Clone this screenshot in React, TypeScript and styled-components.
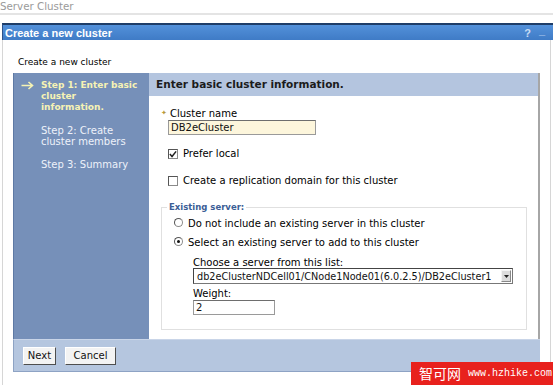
import React from 'react'
import styled, { createGlobalStyle } from 'styled-components'

const GlobalStyles = createGlobalStyle`
  html, body {
    margin: 0;
    padding: 0;
    background: #ffffff;
  }
  body {
    width: 553px;
    height: 385px;
    overflow: hidden;
    font-family: "DejaVu Sans", Verdana, sans-serif;
    color: #000;
  }
`

const steps = [
  { id: 1, lines: ['Step 1: Enter basic', 'cluster', 'information.'], active: true },
  { id: 2, lines: ['Step 2: Create', 'cluster members'], active: false },
  { id: 3, lines: ['Step 3: Summary'], active: false },
]

const App = () => {
  return (
    <Page>
      <GlobalStyles />
      <PageTitle>Server Cluster</PageTitle>

      <Portlet>
        <TitleBar>
          <span>Create a new cluster</span>
          <TitleIcons>
            <span>?</span>
            <span className="min">_</span>
          </TitleIcons>
        </TitleBar>

        <PortletBody>
          <Intro>Create a new cluster</Intro>

          <Wizard>
            <WizardTop>
              <StepNav>
                {steps.map((s) => (
                  <Step key={s.id} active={s.active}>
                    <StepMarker>
                      {s.active ? (
                        <svg width="13" height="9" viewBox="0 0 13 9">
                          <path d="M0.5 4.5 H11 M7.5 1 L11.5 4.5 L7.5 8" fill="none" stroke="#f6f3b4" strokeWidth="1.6" />
                        </svg>
                      ) : null}
                    </StepMarker>
                    <StepText>
                      {s.lines.map((l) => (
                        <div key={l}>{l}</div>
                      ))}
                    </StepText>
                  </Step>
                ))}
              </StepNav>

              <Content>
                <ContentHeader>Enter basic cluster information.</ContentHeader>
                <Form>
                  <FieldLabel>
                    <Required>✦</Required>
                    Cluster name
                  </FieldLabel>
                  <TextInput width={148} indent={7} tinted>DB2eCluster</TextInput>

                  <CheckRow top={13}>
                    <CheckBox>
                      <svg width="9" height="9" viewBox="0 0 9 9">
                        <path d="M1 4 L3.4 6.8 L8 1" fill="none" stroke="#222" strokeWidth="1.7" />
                      </svg>
                    </CheckBox>
                    Prefer local
                  </CheckRow>

                  <CheckRow top={15}>
                    <CheckBox />
                    Create a replication domain for this cluster
                  </CheckRow>

                  <Fieldset>
                    <Legend>Existing server:</Legend>
                    <RadioRow>
                      <Radio />
                      Do not include an existing server in this cluster
                    </RadioRow>
                    <RadioRow>
                      <Radio checked />
                      Select an existing server to add to this cluster
                    </RadioRow>

                    <Nested>
                      <SubLabel>Choose a server from this list:</SubLabel>
                      <Select>
                        <span>db2eClusterNDCell01/CNode1Node01(6.0.2.5)/DB2eCluster1</span>
                        <SelectArrow>
                          <svg width="5" height="3" viewBox="0 0 5 3">
                            <path d="M0 0 H5 L2.5 3 Z" fill="#222" />
                          </svg>
                        </SelectArrow>
                      </Select>
                      <SubLabel className="weight">Weight:</SubLabel>
                      <TextInput width={82} indent={0}>2</TextInput>
                    </Nested>
                  </Fieldset>
                </Form>
              </Content>
            </WizardTop>

            <ButtonBar>
              <Button w={33}>Next</Button>
              <Button w={51}>Cancel</Button>
            </ButtonBar>
          </Wizard>
        </PortletBody>
      </Portlet>

      <Watermark>
        <span className="cn">智可网</span>
        <span className="url">www.hzhike.com</span>
      </Watermark>
    </Page>
  )
}

const Page = styled.div`
  position: relative;
  width: 553px;
  height: 385px;
  overflow: hidden;
`

const PageTitle = styled.div`
  height: 13px;
  line-height: 13px;
  font-size: 10.3px;
  color: #9a9a9a;
  padding-left: 0;
  border-bottom: 2px solid #e4e4e4;
`

const Portlet = styled.div`
  margin: 8px 0 0 2px;
  width: 551px;
`

const TitleBar = styled.div`
  height: 15px;
  border-top: 2px solid #1e3d68;
  border-left: 1px solid #2b5288;
  background: linear-gradient(to bottom, #5391da, #3f7bc6);
  display: flex;
  align-items: center;
  justify-content: space-between;
  padding: 0 8px 0 2px;
  font-family: "Liberation Sans", Arial, sans-serif;
  font-weight: 700;
  font-size: 11px;
  color: #ffffff;
`

const TitleIcons = styled.div`
  display: flex;
  gap: 8px;
  font-size: 11px;
  color: #c9dcf3;
  .min {
    position: relative;
    top: -3px;
  }
`

const PortletBody = styled.div`
  border-left: 1px solid #d6d6d6;
  border-right: 1px solid #d6d6d6;
  border-bottom: 1px solid #d6d6d6;
  width: 547px;
  height: 342px;
  padding-top: 16px;
  box-sizing: content-box;
`

const Intro = styled.div`
  font-size: 9px;
  line-height: 12px;
  margin-left: 15px;
`

const Wizard = styled.div`
  margin: 5px 0 0 10px;
  width: 527px;
  display: flex;
  flex-direction: column;
`

const WizardTop = styled.div`
  display: flex;
  height: 266px;
`

const StepNav = styled.div`
  width: 136px;
  background: #7690b9;
  border-left: 1px solid #5e79a4;
  box-sizing: border-box;
  padding-top: 7px;
  display: flex;
  flex-direction: column;
  gap: 12px;
`

const Step = styled.div<{ active: boolean }>`
  display: flex;
  font-size: ${(p) => (p.active ? '9px' : '10px')};
  line-height: 11px;
  font-weight: ${(p) => (p.active ? 700 : 400)};
  color: ${(p) => (p.active ? '#f6f3b4' : '#eef2f9')};
  white-space: nowrap;
`

const StepMarker = styled.div`
  width: 27px;
  padding-left: 7px;
  box-sizing: border-box;
  padding-top: 1px;
`

const StepText = styled.div``

const Content = styled.div`
  flex: 1;
  display: flex;
  flex-direction: column;
  border-right: 2px solid #a6a6a6;
  background: #ffffff;
`

const ContentHeader = styled.div`
  height: 23px;
  line-height: 23px;
  background: #b4c5df;
  padding-left: 7px;
  font-size: 10.5px;
  font-weight: 700;
  color: #1b1b1b;
`

const Form = styled.div`
  padding: 10px 10px 0 12px;
  display: flex;
  flex-direction: column;
  align-items: flex-start;
  font-size: 10px;
`

const FieldLabel = styled.div`
  line-height: 11px;
  margin-top: 2px;
  display: flex;
  align-items: center;
`

const Required = styled.span`
  color: #b89a3a;
  font-size: 7px;
  width: 9px;
`

const TextInput = styled.div<{ width: number; indent: number; tinted?: boolean }>`
  width: ${(p) => p.width}px;
  height: 15px;
  box-sizing: border-box;
  margin: 1px 0 0 ${(p) => p.indent}px;
  border: 1px solid #9a9a9a;
  border-top-color: #6e6e6e;
  background: ${(p) => (p.tinted ? '#fdf6dc' : '#ffffff')};
  line-height: 13px;
  padding-left: 2px;
  font-size: 10px;
  color: #111;
`

const CheckRow = styled.div<{ top: number }>`
  margin: ${(p) => p.top}px 0 0 7px;
  line-height: 12px;
  display: flex;
  align-items: center;
  gap: 5px;
`

const CheckBox = styled.span`
  width: 10px;
  height: 10px;
  box-sizing: border-box;
  border: 1px solid #8a8a8a;
  border-top-color: #555;
  border-left-color: #555;
  background: #ffffff;
  display: flex;
  align-items: center;
  justify-content: center;
`

const Fieldset = styled.fieldset`
  margin: 15px 0 0 0;
  width: 366px;
  box-sizing: border-box;
  border: 1px solid #e0e0e0;
  padding: 0 0 14px 12px;
`

const Legend = styled.legend`
  padding: 0 2px;
  margin-left: -7px;
  font-size: 8.5px;
  font-weight: 700;
  color: #3b5e96;
`

const RadioRow = styled.div`
  display: flex;
  align-items: center;
  gap: 5px;
  line-height: 12px;
  margin-top: 7px;
  &:first-of-type {
    margin-top: 6px;
  }
`

const Radio = styled.span<{ checked?: boolean }>`
  width: 9px;
  height: 9px;
  box-sizing: border-box;
  border-radius: 50%;
  border: 1px solid #8c8c8c;
  border-top-color: #555;
  border-left-color: #555;
  background: #ffffff;
  position: relative;
  top: -2px;
  &::after {
    content: '';
    display: ${(p) => (p.checked ? 'block' : 'none')};
    position: absolute;
    left: 2px;
    top: 2px;
    width: 3px;
    height: 3px;
    border-radius: 50%;
    background: #111;
  }
`

const Nested = styled.div`
  margin: 8px 0 0 19px;
  display: flex;
  flex-direction: column;
  align-items: flex-start;
  .weight {
    margin-top: 4px;
  }
`

const SubLabel = styled.div`
  line-height: 11px;
  margin-left: 0;
`

const Select = styled.div`
  width: 320px;
  height: 16px;
  box-sizing: border-box;
  border: 1px solid #777;
  border-top-color: #444;
  border-left-color: #444;
  display: flex;
  align-items: center;
  justify-content: space-between;
  padding: 0 1px 0 3px;
  font-size: 9.7px;
  color: #111;
  background: #ffffff;
  white-space: nowrap;
`

const SelectArrow = styled.span`
  width: 10px;
  height: 12px;
  flex-shrink: 0;
  box-sizing: border-box;
  background: #dcdcdc;
  border: 1px solid #f4f4f4;
  border-right-color: #888;
  border-bottom-color: #888;
  display: flex;
  align-items: center;
  justify-content: center;
`

const ButtonBar = styled.div`
  height: 33px;
  background: #b5c6df;
  border-left: 1px solid #8ea3c4;
  border-top: 1px solid #c9d5e8;
  border-bottom: 1px solid #8ea3c4;
  display: flex;
  align-items: center;
  gap: 9px;
  padding-left: 9px;
  box-sizing: border-box;
`

const Button = styled.div<{ w: number }>`
  width: ${(p) => p.w}px;
  height: 18px;
  box-sizing: border-box;
  background: #f3f3f3;
  border: 1px solid #ffffff;
  border-right-color: #4e4e4e;
  border-bottom-color: #4e4e4e;
  font-size: 10px;
  line-height: 16px;
  text-align: center;
  color: #111;
`

const Watermark = styled.div`
  position: absolute;
  right: 0;
  bottom: 0;
  width: 142px;
  height: 23px;
  background: #e8211d;
  color: #ffffff;
  display: flex;
  align-items: center;
  gap: 7px;
  padding-left: 8px;
  box-sizing: border-box;
  .cn {
    font-family: "Noto Sans CJK SC", sans-serif;
    font-size: 14px;
    line-height: 23px;
  }
  .url {
    font-family: "Liberation Mono", monospace;
    font-size: 10px;
  }
`

export default App
